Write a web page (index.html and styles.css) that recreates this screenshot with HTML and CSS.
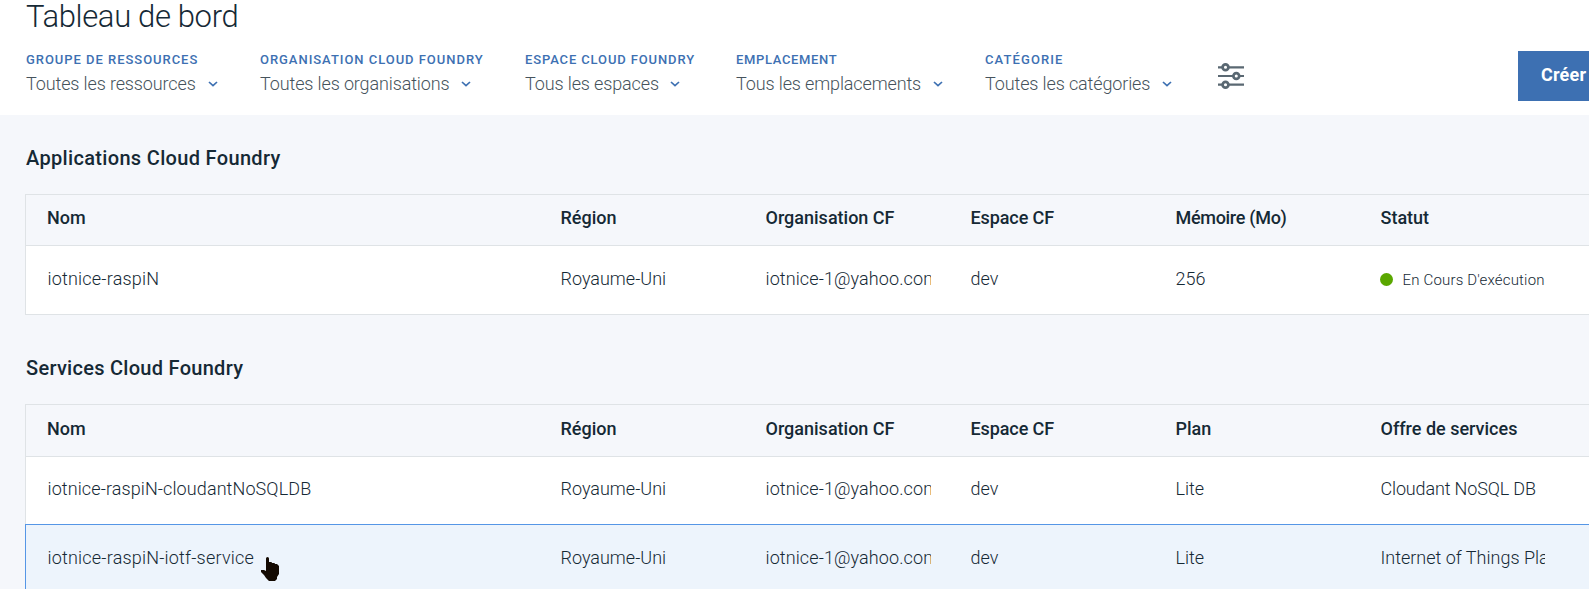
FILE: index.html
```
<!DOCTYPE html>
<html lang="fr">
<head>
<meta charset="utf-8">
<title>Tableau de bord</title>
<link rel="stylesheet" href="styles.css">
</head>
<body>
<header class="top">
  <h1 class="title">Tableau de bord</h1>
  <div class="filters">
    <div class="filter f1"><div class="label">GROUPE DE RESSOURCES</div><div class="value"><span>Toutes les ressources</span><svg class="chev" viewBox="0 0 10 6"><path d="M1 1l4 3.7L9 1"/></svg></div></div>
    <div class="filter f2"><div class="label">ORGANISATION CLOUD FOUNDRY</div><div class="value"><span>Toutes les organisations</span><svg class="chev" viewBox="0 0 10 6"><path d="M1 1l4 3.7L9 1"/></svg></div></div>
    <div class="filter f3"><div class="label">ESPACE CLOUD FOUNDRY</div><div class="value"><span>Tous les espaces</span><svg class="chev" viewBox="0 0 10 6"><path d="M1 1l4 3.7L9 1"/></svg></div></div>
    <div class="filter f4"><div class="label">EMPLACEMENT</div><div class="value"><span>Tous les emplacements</span><svg class="chev" viewBox="0 0 10 6"><path d="M1 1l4 3.7L9 1"/></svg></div></div>
    <div class="filter f5"><div class="label">CATÉGORIE</div><div class="value"><span>Toutes les catégories</span><svg class="chev" viewBox="0 0 10 6"><path d="M1 1l4 3.7L9 1"/></svg></div></div>
    <svg class="sliders" viewBox="0 0 26 26"><path d="M0 4.3h26M0 13h26M0 21.7h26"/><circle cx="7.5" cy="4.3" r="2.9"/><circle cx="18.3" cy="13" r="2.9"/><circle cx="7.5" cy="21.7" r="2.9"/></svg>
    <button class="create">Créer</button>
  </div>
</header>
<main class="content">
  <h2 class="heading h-apps">Applications Cloud Foundry</h2>
  <div class="table">
    <div class="row head"><div>Nom</div><div>Région</div><div>Organisation CF</div><div class="space">Espace CF</div><div class="memory">Mémoire (Mo)</div><div>Statut</div></div>
    <div class="row"><div class="name">iotnice-raspiN</div><div>Royaume-Uni</div><div class="mail">iotnice-1@yahoo.com</div><div>dev</div><div>256</div><div class="status"><i class="dot"></i><span>En Cours D'exécution</span></div></div>
  </div>
  <h2 class="heading h-services">Services Cloud Foundry</h2>
  <div class="table services">
    <div class="row head"><div>Nom</div><div>Région</div><div>Organisation CF</div><div class="space">Espace CF</div><div>Plan</div><div>Offre de services</div></div>
    <div class="row"><div class="name long">iotnice-raspiN-cloudantNoSQLDB</div><div>Royaume-Uni</div><div class="mail">iotnice-1@yahoo.com</div><div>dev</div><div>Lite</div><div class="offer">Cloudant NoSQL DB</div></div>
    <div class="row active"><div class="name">iotnice-raspiN-iotf-service</div><div>Royaume-Uni</div><div class="mail">iotnice-1@yahoo.com</div><div>dev</div><div>Lite</div><div>Internet of Things Platform</div></div>
  </div>
</main>
<svg class="cursor" viewBox="0 0 18 24"><path d="M5 1.5Q5 0 6.5 0T8 1.5V5h2.500l.5 1h2.500l.5 1h2l2 2v8l-2 3v2l-2 2H8l-3-3-2-3-3-3v-2h3l2 1z"/></svg>
</body>
</html>
```
FILE: styles.css
```
* { box-sizing: border-box; }
body { margin: 0; width: 1589px; height: 589px; overflow: hidden; position: relative; background: #f5f7fb; color: #152935; font-family: Roboto, "Liberation Sans", sans-serif; font-size: 18px; }
.top { height: 115px; background: #fff; }
.title { margin: 0 0 0 26px; height: 51px; padding-top: 1px; font-size: 31px; line-height: 32px; font-weight: 300; letter-spacing: -.35px; }
.filters { display: flex; padding-left: 26px; height: 50px; }
.filter { flex: none; white-space: nowrap; }
.f1 { width: 234px; } .f2 { width: 265px; } .f3 { width: 211px; } .f4 { width: 249px; } .f5 { width: 233px; }
.label { height: 19px; line-height: 17px; font-size: 13px; font-weight: 500; color: #3d70b2; letter-spacing: .96px; }
.f3 .label { letter-spacing: .87px; }
.f4 .label { letter-spacing: .65px; }
.f5 .label { letter-spacing: 1.1px; }
.value { display: flex; align-items: center; height: 27px; line-height: 27px; font-weight: 300; color: #46535c; letter-spacing: -.13px; }
.chev { width: 10px; height: 6px; margin: 1px 0 0 12px; fill: none; stroke: #3d70b2; stroke-width: 1.7; }
.f2 .chev, .f3 .chev { margin-left: 11px; }
.sliders { flex: none; width: 26px; height: 26px; margin-top: 12px; fill: #fff; stroke: #5a6872; stroke-width: 2.7; }
.sliders path { stroke-width: 2.2; }
.create { flex: 1; height: 50px; margin-left: 274px; padding: 0 0 3px 23px; border: 0; background: #3d70b2; color: #fff; font: 700 18px Roboto, sans-serif; letter-spacing: .2px; text-align: left; }
.content { padding-left: 25px; }
.heading { margin: 0; padding-left: 1px; font-size: 20px; line-height: 28px; font-weight: 500; letter-spacing: .33px; }
.h-apps { padding-top: 29px; height: 79px; }
.h-services { padding-top: 39px; height: 89px; letter-spacing: .28px; }
.table { border: 1px solid #dfe3e6; border-right: 0; background: #fff; }
.row { display: grid; grid-template-columns: 513.5px 205px 205px 205px 205px 1fr; height: 68px; padding-left: 21px; line-height: 66px; font-weight: 300; }
.row > div { white-space: nowrap; overflow: hidden; margin-right: 40px; }
.row > div:last-child { margin-right: 44px; }
.head { height: 51px; background: #f5f7fb; border-bottom: 1px solid #dfe3e6; line-height: 46px; font-weight: 500; }
.services .head { height: 52px; line-height: 48px; }
.services .row:nth-child(2) { line-height: 64px; }
.name { letter-spacing: .2px; }
.long { letter-spacing: .1px; }
.row > .name { padding-left: .5px; }
.mail { letter-spacing: .1px; }
.space { letter-spacing: -.1px; }
.memory { letter-spacing: -.3px; }
.offer { letter-spacing: -.15px; }
.row > .status { display: flex; align-items: center; margin-left: -1px; font-size: 15px; letter-spacing: .18px; }
.dot { flex: none; width: 13px; height: 13px; margin: 0 10px 2px 0; border-radius: 50%; background: #5aa700; }
.active { height: 66px; margin: -1px 0 0 -1px; padding-left: 21px; background: #edf4fc; border: solid #5596e6; border-width: 1px 0 0 1px; }
.cursor { position: absolute; left: 261px; top: 557px; width: 18px; height: 24px; fill: #140a02; }
```
